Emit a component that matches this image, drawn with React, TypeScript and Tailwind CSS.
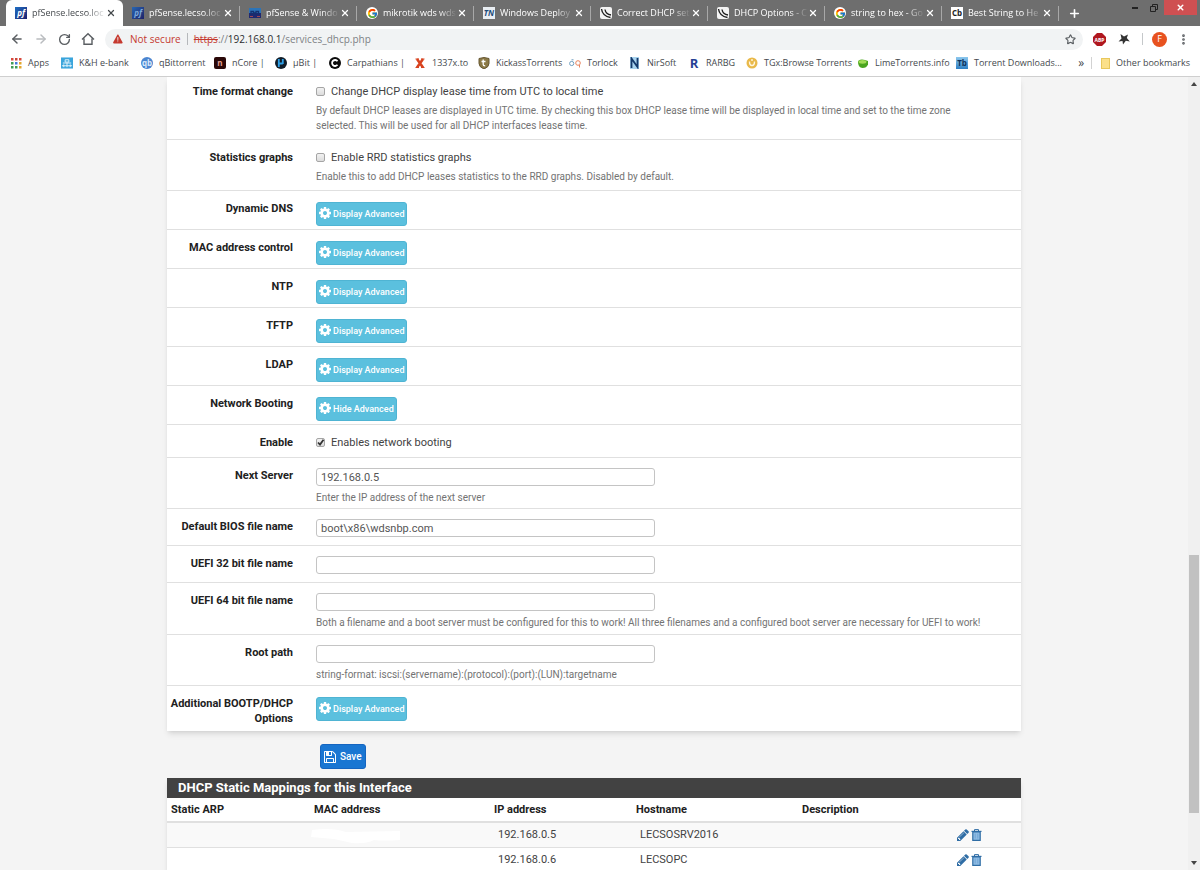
import { type ReactNode } from "react";
import {
  ArrowLeft,
  ArrowRight,
  EllipsisVertical,
  Plus,
  RotateCw,
  Star,
  X,
} from "lucide-react";
import { FcGoogle } from "react-icons/fc";
import { IoWarning } from "react-icons/io5";

const COG =
  "M1152 896q0-106-75-181t-181-75-181 75-75 181 75 181 181 75 181-75 75-181zm512-109v222q0 12-8 23t-20 13l-185 28q-19 54-39 91 35 50 107 138 10 12 10 25t-9 23q-27 37-99 108t-94 71q-12 0-26-9l-138-108q-44 23-91 38-16 136-29 186-7 28-36 28h-222q-14 0-24.5-8.5t-11.5-21.5l-28-184q-49-16-90-37l-141 107q-10 9-25 9-14 0-25-11-126-114-165-168-7-10-7-23 0-12 8-23 15-21 51-66.5t54-70.5q-27-50-41-99l-183-27q-13-2-21-12.5t-8-23.5v-222q0-12 8-23t19-13l186-28q14-46 39-92-40-57-107-138-10-12-10-24 0-10 9-23 26-36 98.5-107.5t94.5-71.5q13 0 26 10l138 107q44-23 91-38 16-136 29-186 7-28 36-28h222q14 0 24.5 8.5t11.5 21.5l28 184q49 16 90 37l142-107q9-9 24-9 13 0 25 10 129 119 165 170 7 8 7 22 0 12-8 23-15 21-51 66.5t-54 70.5q26 50 41 98l183 28q13 2 21 12.5t8 23.5z";
const PENCIL =
  "M491 1536l91-91-235-235-91 91v107h128v128h107zm523-928q0-22-22-22-10 0-17 7l-542 542q-7 7-7 17 0 22 22 22 10 0 17-7l542-542q7-7 7-17zm-54-192l416 416-832 832h-416v-416zm683 96q0 53-37 90l-166 166-416-416 166-165q36-38 90-38 53 0 91 38l235 234q37 39 37 91z";
const SAVE =
  "M512 1536h768v-384h-768v384zm896 0h128v-896q0-14-10-38.5t-20-34.5l-281-281q-10-10-34-20t-39-10v416q0 40-28 68t-68 28h-576q-40 0-68-28t-28-68v-416h-128v1280h128v-416q0-40 28-68t68-28h832q40 0 68 28t28 68v416zm-384-928v-320q0-13-9.5-22.5t-22.5-9.5h-192q-13 0-22.5 9.5t-9.5 22.5v320q0 13 9.5 22.5t22.5 9.5h192q13 0 22.5-9.5t9.5-22.5zm640 32v928q0 40-28 68t-68 28h-1344q-40 0-68-28t-28-68v-1344q0-40 28-68t68-28h928q40 0 88 20t76 48l280 280q28 28 48 76t20 88z";

function Glyph({ d, className }: { d: string; className: string }) {
  return (
    <svg viewBox="128 128 1536 1536" fill="currentColor" className={className}>
      <path d={d} />
    </svg>
  );
}

function Trash() {
  return (
    <svg viewBox="0 0 11 12" className="h-3 w-[11px]">
      <path d="M3.5 2V.6h4V2" fill="none" stroke="#2f6da5" />
      <path d="M.5 2.4h10" stroke="#2f6da5" strokeWidth="1.2" />
      <path d="M1.8 3h7.4v8.3H1.8z" fill="#8fbce4" stroke="#2f6da5" strokeWidth="1.2" />
      <path d="M4.2 4.5v5M6.8 4.5v5" stroke="#6a9fd0" strokeWidth=".8" />
    </svg>
  );
}

/* ---- site icons ---- */

function Badge({ className, children }: { className: string; children?: ReactNode }) {
  return (
    <span
      className={`flex h-3 w-3 shrink-0 items-center justify-center text-[8px] leading-none font-bold ${className}`}
    >
      {children}
    </span>
  );
}

const PfIcon = () => (
  <Badge className="bg-linear-to-br from-[#1d6fc4] to-[#1b1f6e] text-white italic">pf</Badge>
);

const PfDarkIcon = () => (
  <Badge className="bg-linear-to-br from-[#2767b4] to-[#1d2168] text-[#7da9da] italic">pf</Badge>
);

const ForumIcon = () => (
  <svg viewBox="0 0 12 12" className="h-3 w-3 shrink-0">
    <path d="M0 1h12v5H0z" fill="#2c74b8" />
    <path d="M0 6h12v5H0z" fill="#20286f" />
    <path d="M2 8V4.5h2.500V8M7 8V4.500h2.500V8M4.500 6H7" fill="none" stroke="#15306e" strokeWidth="1.300" />
    <path d="M1 9.500h3M8 9.500h3" stroke="#c0504a" strokeWidth=".8" />
  </svg>
);

const NetgateIcon = () => (
  <svg viewBox="0 0 12 12" className="h-3 w-3 shrink-0">
    <rect width="12" height="12" rx="2" fill="#f4f4f4" />
    <path d="M1.500 2C2 6 5 9.500 10.500 10.500M5 2.500C5.500 5.500 7.500 7.500 11 8" fill="none" stroke="#222" strokeWidth="1.400" />
  </svg>
);

const AppsIcon = () => (
  <svg viewBox="0 0 12 12" className="h-3 w-3 shrink-0">
    {["#d8483c", "#c9443a", "#d8483c", "#3f9c55", "#4379d8", "#e3a62c", "#3f9c55", "#3f9c55", "#e3a62c"].map(
      (fill, i) => (
        <rect key={i} x={1 + (i % 3) * 4} y={1 + Math.floor(i / 3) * 4} width="2.500" height="2.500" fill={fill} />
      )
    )}
  </svg>
);

const BankIcon = () => (
  <svg viewBox="0 0 13 12" className="h-3 w-3 shrink-0">
    <path d="M0 0h13v12H0z" fill="#3aa5dc" />
    <path d="M4.500 2.500h4v2.500h-4zM2 6h9M1 9h11M3 7.500v3M6.500 6v4.500M10 7.500v3" fill="none" stroke="#e8f6fd" />
  </svg>
);

const MicroIcon = () => (
  <svg viewBox="0 0 12 12" className="h-3 w-3 shrink-0">
    <circle cx="6" cy="6" r="6" fill="#101c28" />
    <path d="M3.800 2v8M3.800 6.500h4M7.800 2v5" stroke="#2e9fe6" strokeWidth="1.800" fill="none" />
  </svg>
);

const CIcon = () => (
  <svg viewBox="0 0 12 12" className="h-3 w-3 shrink-0">
    <circle cx="6" cy="6" r="6" fill="#0b0b0b" />
    <path d="M8.500 4.200A3 3 0 1 0 8.500 7.800" stroke="#fff" strokeWidth="1.800" fill="none" />
  </svg>
);

const ShieldIcon = () => (
  <svg viewBox="0 0 12 12" className="h-3 w-3 shrink-0">
    <path d="M1 1.500 6 .5l5 1v5q0 3.500-5 5.500-5-2-5-5.500z" fill="#8c7a46" stroke="#665732" />
    <path d="M5.200 2.500v5q0 1.300 2 1.300M3.500 4.500h4" fill="none" stroke="#fff" strokeWidth="1.300" />
  </svg>
);

const CrossIcon = () => (
  <svg viewBox="0 0 12 12" className="h-3 w-3 shrink-0">
    <path d="m3 2 6 8.500M9 2l-6 8.500" stroke="#d8431f" strokeWidth="2.600" />
    <path d="M1.500 2h3.500M7 2h3.500M1.500 10.500H5M7 10.500h3.500" stroke="#d8431f" strokeWidth="1.200" />
  </svg>
);

const TorlockIcon = () => (
  <svg viewBox="0 0 12 12" className="h-3 w-3 shrink-0">
    <circle cx="2.700" cy="6.500" r="2.100" fill="none" stroke="#6f9fc0" />
    <path d="M2.500 2.800h2" stroke="#6f9fc0" />
    <circle cx="9" cy="6" r="2.300" fill="none" stroke="#e8835d" />
    <path d="M10.500 8v2.500" stroke="#e8835d" />
  </svg>
);

const NirIcon = () => (
  <svg viewBox="0 0 12 12" className="h-3 w-3 shrink-0">
    <path d="M1 0h9v12H1z" fill="#a9d4ef" />
    <path d="M2.500 11V1.500L8.500 10V1" fill="none" stroke="#15396b" strokeWidth="1.800" />
  </svg>
);

const GalaxyIcon = () => (
  <svg viewBox="0 0 12 12" className="h-3 w-3 shrink-0">
    <circle cx="6" cy="6" r="5.500" fill="#e9b949" />
    <path d="M3.500 4.500q0 4 2.500 4t2.500-4M6 2v2" fill="none" stroke="#fff6df" strokeWidth="1.400" />
  </svg>
);

const LimeIcon = () => (
  <svg viewBox="0 0 12 12" className="h-3 w-3 shrink-0">
    <path d="M1 5q0-2.500 4-2.500 3 0 6 1.500v3.500Q9.500 11 5.500 11 1 10.500 1 5z" fill="#4aa51f" />
    <ellipse cx="5.500" cy="4.800" rx="4" ry="1.900" fill="#a2dc57" />
  </svg>
);

const GoogleIcon = () => (
  <Badge className="rounded-full bg-white">
    <FcGoogle className="h-[11px] w-[11px]" />
  </Badge>
);

/* ---- browser chrome ---- */

const tabs = [
  { title: "pfSense.lecso.loc", icon: <PfIcon /> },
  { title: "pfSense.lecso.loc", icon: <PfDarkIcon /> },
  { title: "pfSense & Windo", icon: <ForumIcon /> },
  { title: "mikrotik wds wds", icon: <GoogleIcon /> },
  { title: "Windows Deploy", icon: <Badge className="bg-[#e9eef3] text-[#1c4a78] italic">TN</Badge> },
  { title: "Correct DHCP set", icon: <NetgateIcon /> },
  { title: "DHCP Options - C", icon: <NetgateIcon /> },
  { title: "string to hex - Go", icon: <GoogleIcon /> },
  { title: "Best String to He", icon: <Badge className="bg-white text-[#222]">Cb</Badge> },
];

const bookmarks = [
  { name: "Apps", width: "w-[51px]", icon: <AppsIcon /> },
  { name: "K&H e-bank", width: "w-[80px]", icon: <BankIcon /> },
  { name: "qBittorrent", width: "w-[73px]", icon: <Badge className="rounded-full bg-[#4b85d0] text-[#dbe9fb]">qb</Badge> },
  { name: "nCore |", width: "w-[61px]", icon: <Badge className="rounded-xs bg-[#2a0808] text-[#e8a090]">n</Badge> },
  { name: "µBit |", width: "w-[54px]", icon: <MicroIcon /> },
  { name: "Carpathians |", width: "w-[85px]", icon: <CIcon /> },
  { name: "1337x.to", width: "w-[64px]", icon: <CrossIcon /> },
  { name: "KickassTorrents", width: "w-[91px]", icon: <ShieldIcon /> },
  { name: "Torlock", width: "w-[60px]", icon: <TorlockIcon /> },
  { name: "NirSoft", width: "w-[59px]", icon: <NirIcon /> },
  { name: "RARBG", width: "w-[58px]", icon: <Badge className="text-[13px] text-[#263f94]">R</Badge> },
  { name: "TGx:Browse Torrents", width: "w-[111px]", icon: <GalaxyIcon /> },
  { name: "LimeTorrents.info", width: "w-[99px]", icon: <LimeIcon /> },
  { name: "Torrent Downloads...", width: "w-[112px]", icon: <Badge className="bg-linear-to-b from-[#8cc8ee] to-[#2b7fc4] text-[#0c3159]">Tb</Badge> },
];

function TabStrip() {
  return (
    <div className="flex h-[26px] items-stretch bg-[#6e6e6e] pl-[6px] text-white">
      {tabs.map((tab, i) => (
        <div
          key={i}
          className={`flex w-[117px] min-w-0 items-center ${i === 0 ? "rounded-t-md bg-white text-[#45494d]" : ""}`}
        >
          <div className="flex min-w-0 flex-1 items-center gap-[5px] pl-[9px]">
            {tab.icon}
            <span className="flex-1 whitespace-nowrap mask-r-from-75% mask-r-to-100%">{tab.title}</span>
          </div>
          <button aria-label="Close tab" className="mr-[6px]">
            <X className="h-[10px] w-[10px]" strokeWidth={3} />
          </button>
          <span className={`h-[15px] w-px ${i > 0 ? "bg-[#a8a8a8]" : ""}`} />
        </div>
      ))}
      <button aria-label="New tab" className="ml-[9px]">
        <Plus className="h-[13px] w-[13px]" strokeWidth={3} />
      </button>
      <div className="mr-[3px] ml-auto flex items-start text-[#222]">
        <button aria-label="Minimize" className="flex h-[15px] w-[18px] items-center justify-center">
          <span className="h-[2px] w-[6px] bg-[#222]" />
        </button>
        <button aria-label="Restore" className="flex h-[15px] w-[20px] items-center justify-center">
          <svg viewBox="0 0 8 8" className="h-2 w-2" fill="none" stroke="#222">
            <path d="M.5 2.500h5v5h-5zM2.500 2V.5h5v5H6" />
          </svg>
        </button>
        <button aria-label="Close" className="flex h-[15px] w-[33px] items-center justify-center bg-[#cf5052] text-white">
          <X className="h-[9px] w-[9px]" strokeWidth={4} />
        </button>
      </div>
    </div>
  );
}

function Toolbar() {
  return (
    <div className="flex h-[26px] items-center bg-white pr-[10px] pl-[10px] text-[#5a5e62]">
      <div className="flex items-center gap-[10px]">
        <button aria-label="Back"><ArrowLeft className="h-[14px] w-[14px]" strokeWidth={2.5} /></button>
        <button aria-label="Forward" className="text-[#b9bcbf]"><ArrowRight className="h-[14px] w-[14px]" strokeWidth={2.5} /></button>
        <button aria-label="Reload"><RotateCw className="h-[13px] w-[13px]" strokeWidth={2.5} /></button>
        <button aria-label="Home">
          <svg viewBox="0 0 14 14" className="h-[14px] w-[14px]" fill="none" stroke="currentColor" strokeWidth="1.400">
            <path d="M3 6.500v5.800h8V6.500M1 7.600 7 1.800l6 5.800" />
          </svg>
        </button>
      </div>
      <div className="ml-[10px] flex h-[21px] flex-1 items-center rounded-full bg-[#f1f3f4] pr-[7px] pl-[7px] text-[10px]">
        <IoWarning className="h-3 w-3 text-[#c5392f]" />
        <span className="ml-[6px] text-[#c5392f]">Not secure</span>
        <span className="mx-[6px] h-3 w-px bg-[#b5b8bb]" />
        <span className="flex-1 text-[#7d8185]">
          <span className="text-[#c5392f] line-through">https</span>://
          <span className="text-[#2b2d30]">192.168.0.1</span>/services_dhcp.php
        </span>
        <button aria-label="Bookmark this page"><Star className="h-[11px] w-[11px]" strokeWidth={2.5} /></button>
      </div>
      <div className="ml-[10px] flex items-center">
        <svg viewBox="0 0 13 13" className="h-[13px] w-[13px]">
          <path d="M4 0h5l4 4v5l-4 4H4L0 9V4z" fill="#b0171f" />
          <text x="6.500" y="8.500" textAnchor="middle" fontSize="5" fontWeight="700" fill="#fff">ABP</text>
        </svg>
        <svg viewBox="0 0 12 12" className="ml-3 h-3 w-3" fill="#333">
          <path d="M2.500 1 6 3.500 10 1.500 8.800 5l3 3.500-4-.8L5 11.500 4.500 8 .5 8.500 3.500 5.500z" />
        </svg>
        <span className="ml-[12px] h-3 w-px bg-[#c5c8ca]" />
        <span className="ml-[9px] flex h-[15px] w-[15px] items-center justify-center rounded-full bg-[#e8521f] text-[9px] text-white">
          F
        </span>
        <button aria-label="Menu" className="ml-[10px]"><EllipsisVertical className="h-[13px] w-[13px]" strokeWidth={3} /></button>
      </div>
    </div>
  );
}

function BookmarkBar() {
  return (
    <nav className="flex h-[25px] items-center border-b border-[#cfcfcf] bg-white pr-[10px] pb-[2px] pl-[10px] text-[#45494d]">
      {bookmarks.map((b) => (
        <a key={b.name} href="#" className={`flex shrink-0 items-center gap-[6px] whitespace-nowrap ${b.width}`}>
          {b.icon}
          {b.name}
        </a>
      ))}
      <div className="ml-auto flex items-center">
        <button className="mr-[7px] text-[12px] leading-3">»</button>
        <span className="mr-[9px] h-3 w-px bg-[#d2d2d2]" />
        <a href="#" className="flex items-center gap-[6px] whitespace-nowrap">
          <span className="h-[11px] w-[9px] border border-[#e8c75c] bg-[#fbe08a]" />
          Other bookmarks
        </a>
      </div>
    </nav>
  );
}

/* ---- page ---- */

function Row({ label, htmlFor, className, children }: { label: string; htmlFor: string; className: string; children: ReactNode }) {
  return (
    <div className={`grid grid-cols-[126px_1fr] gap-x-[23px] border-b border-[#e0e0e0] last:border-b-0 ${className}`}>
      <label htmlFor={htmlFor} className="text-right font-bold text-[#212121]">
        {label}
      </label>
      <div>{children}</div>
    </div>
  );
}

function Check({ id, text, checked }: { id: string; text: string; checked?: boolean }) {
  return (
    <label className="relative flex items-center gap-[6px]">
      <input
        id={id}
        type="checkbox"
        defaultChecked={checked}
        className="peer h-[9px] w-[9px] appearance-none rounded-[2px] border border-[#a5a5a5] bg-linear-to-b from-[#f2f2f2] to-[#dcdcdc]"
      />
      <svg
        viewBox="0 0 9 9"
        className="pointer-events-none absolute left-0 hidden h-[9px] w-[9px] peer-checked:block"
        fill="none"
        stroke="#333"
        strokeWidth="1.800"
      >
        <path d="M2 4.500 4 6.600 7.500 1.800" />
      </svg>
      {text}
    </label>
  );
}

function Help({ children }: { children: ReactNode }) {
  return <p className="mt-1 max-w-[670px] text-[10px] leading-[15px] text-[#737373]">{children}</p>;
}

function AdvancedButton({ id, text }: { id: string; text: string }) {
  return (
    <button
      id={id}
      className="mt-px flex h-6 items-center gap-[2px] rounded-[3px] border border-[#4fb4d3] bg-[#5bc0de] px-[2px] text-[9px] font-medium text-white"
    >
      <Glyph d={COG} className="mb-[3px] h-3 w-3" />
      {text}
    </button>
  );
}

function TextField({ id, value }: { id: string; value?: string }) {
  return (
    <input
      id={id}
      type="text"
      defaultValue={value}
      className="block h-[18px] w-[339px] max-w-full rounded-[3px] border border-[#c4c4c4] bg-white px-1 text-[#555]"
    />
  );
}

const advanced = [
  { id: "ddns", label: "Dynamic DNS", text: "Display Advanced" },
  { id: "mac", label: "MAC address control", text: "Display Advanced" },
  { id: "ntp", label: "NTP", text: "Display Advanced" },
  { id: "tftp", label: "TFTP", text: "Display Advanced" },
  { id: "ldap", label: "LDAP", text: "Display Advanced" },
  { id: "netboot", label: "Network Booting", text: "Hide Advanced" },
];

const mappings = [
  { ip: "192.168.0.5", hostname: "LECSOSRV2016", masked: true },
  { ip: "192.168.0.6", hostname: "LECSOPC", masked: false },
];

function Settings() {
  return (
    <section className="bg-white shadow-md">
      <Row label="Time format change" htmlFor="timefmt" className="min-h-[63px] pt-[7px]">
        <Check id="timefmt" text="Change DHCP display lease time from UTC to local time" />
        <Help>
          By default DHCP leases are displayed in UTC time. By checking this box DHCP lease time will be displayed in
          local time and set to the time zone selected. This will be used for all DHCP interfaces lease time.
        </Help>
      </Row>
      <Row label="Statistics graphs" htmlFor="rrd" className="min-h-[51px] pt-[10px]">
        <Check id="rrd" text="Enable RRD statistics graphs" />
        <Help>Enable this to add DHCP leases statistics to the RRD graphs. Disabled by default.</Help>
      </Row>
      {advanced.map((a) => (
        <Row key={a.id} label={a.label} htmlFor={a.id} className="min-h-[39px] pt-[10px]">
          <AdvancedButton id={a.id} text={a.text} />
        </Row>
      ))}
      <Row label="Enable" htmlFor="enable" className="min-h-[33px] pt-[10px]">
        <Check id="enable" text="Enables network booting" checked />
      </Row>
      <Row label="Next Server" htmlFor="nextserver" className="min-h-[51px] pt-[10px]">
        <TextField id="nextserver" value="192.168.0.5" />
        <Help>Enter the IP address of the next server</Help>
      </Row>
      <Row label="Default BIOS file name" htmlFor="bios" className="min-h-[37px] pt-[10px]">
        <TextField id="bios" value="boot\x86\wdsnbp.com" />
      </Row>
      <Row label="UEFI 32 bit file name" htmlFor="uefi32" className="min-h-[37px] pt-[10px]">
        <TextField id="uefi32" />
      </Row>
      <Row label="UEFI 64 bit file name" htmlFor="uefi64" className="min-h-[52px] pt-[10px]">
        <TextField id="uefi64" />
        <Help>
          Both a filename and a boot server must be configured for this to work! All three filenames and a configured
          boot server are necessary for UEFI to work!
        </Help>
      </Row>
      <Row label="Root path" htmlFor="rootpath" className="min-h-[51px] pt-[10px]">
        <TextField id="rootpath" />
        <Help>string-format: iscsi:(servername):(protocol):(port):(LUN):targetname</Help>
      </Row>
      <Row label="Additional BOOTP/DHCP Options" htmlFor="bootp" className="min-h-[45px] pt-[10px]">
        <AdvancedButton id="bootp" text="Display Advanced" />
      </Row>
    </section>
  );
}

function Mappings() {
  return (
    <section className="mt-[9px] bg-white shadow-md">
      <h2 className="bg-[#424242] px-[11px] text-[13px] leading-5 font-bold text-white">
        DHCP Static Mappings for this Interface
      </h2>
      <table className="w-full table-fixed text-left">
        <thead>
          <tr className="h-6 border-b-2 border-[#e0e0e0] text-[#212121]">
            <th className="w-[143px] pl-1">Static ARP</th>
            <th className="w-[180px] pl-1">MAC address</th>
            <th className="w-[142px] pl-1">IP address</th>
            <th className="w-[166px] pl-1">Hostname</th>
            <th className="w-[152px] pl-1">Description</th>
            <th />
          </tr>
        </thead>
        <tbody>
          {mappings.map((m) => (
            <tr key={m.ip} className="h-[25px] border-b border-[#e0e0e0] odd:bg-[#f9f9f9]">
              <td />
              <td>
                {m.masked && (
                  <svg viewBox="0 0 92 18" className="h-[18px] w-[92px]" fill="#fff">
                    <path d="M2 4q20-3 34 2l54-1v9q-18 1-26 0-8 4-22 3L24 13 1 11z" />
                  </svg>
                )}
              </td>
              <td className="pl-[8px]">{m.ip}</td>
              <td className="pl-[8px]">{m.hostname}</td>
              <td />
              <td className="pl-[7px]">
                <div className="flex items-center gap-[2px] text-[#2f6da5]">
                  <a href="#" aria-label="Edit static mapping"><Glyph d={PENCIL} className="h-3 w-3" /></a>
                  <a href="#" aria-label="Delete static mapping"><Trash /></a>
                </div>
              </td>
            </tr>
          ))}
        </tbody>
      </table>
    </section>
  );
}

function Scrollbar() {
  return (
    <div className="flex w-3 flex-col items-center bg-[#f0f0f0] py-[5px]">
      <svg viewBox="0 0 6 4" className="h-1 w-[6px] shrink-0" fill="#444"><path d="M0 4h6L3 0z" /></svg>
      <span className="flex-[468]" />
      <span className="w-[10px] flex-[258] bg-[#c1c1c1]" />
      <span className="flex-[48]" />
      <svg viewBox="0 0 6 4" className="h-1 w-[6px] shrink-0" fill="#444"><path d="M0 0h6L3 4z" /></svg>
    </div>
  );
}

export default function App() {
  return (
    <div className="flex h-screen flex-col overflow-hidden bg-[#f4f4f4]">
      <header className="shrink-0 font-['Open_Sans',sans-serif] text-[9px]">
        <TabStrip />
        <Toolbar />
        <BookmarkBar />
      </header>
      <div className="flex min-h-0 flex-1">
        <main className="min-w-0 flex-1 overflow-hidden font-[Roboto,sans-serif] text-[11px] leading-[15px] text-[#424242]">
          <div className="mx-auto max-w-[854px]">
            <Settings />
            <button className="mt-[13px] ml-[153px] flex h-[25px] items-center gap-1 rounded-[3px] border border-[#1565c0] bg-[#1976d2] px-[3px] text-[10px] font-medium text-white">
              <Glyph d={SAVE} className="h-3 w-3" />
              Save
            </button>
            <Mappings />
          </div>
        </main>
        <Scrollbar />
      </div>
    </div>
  );
}
